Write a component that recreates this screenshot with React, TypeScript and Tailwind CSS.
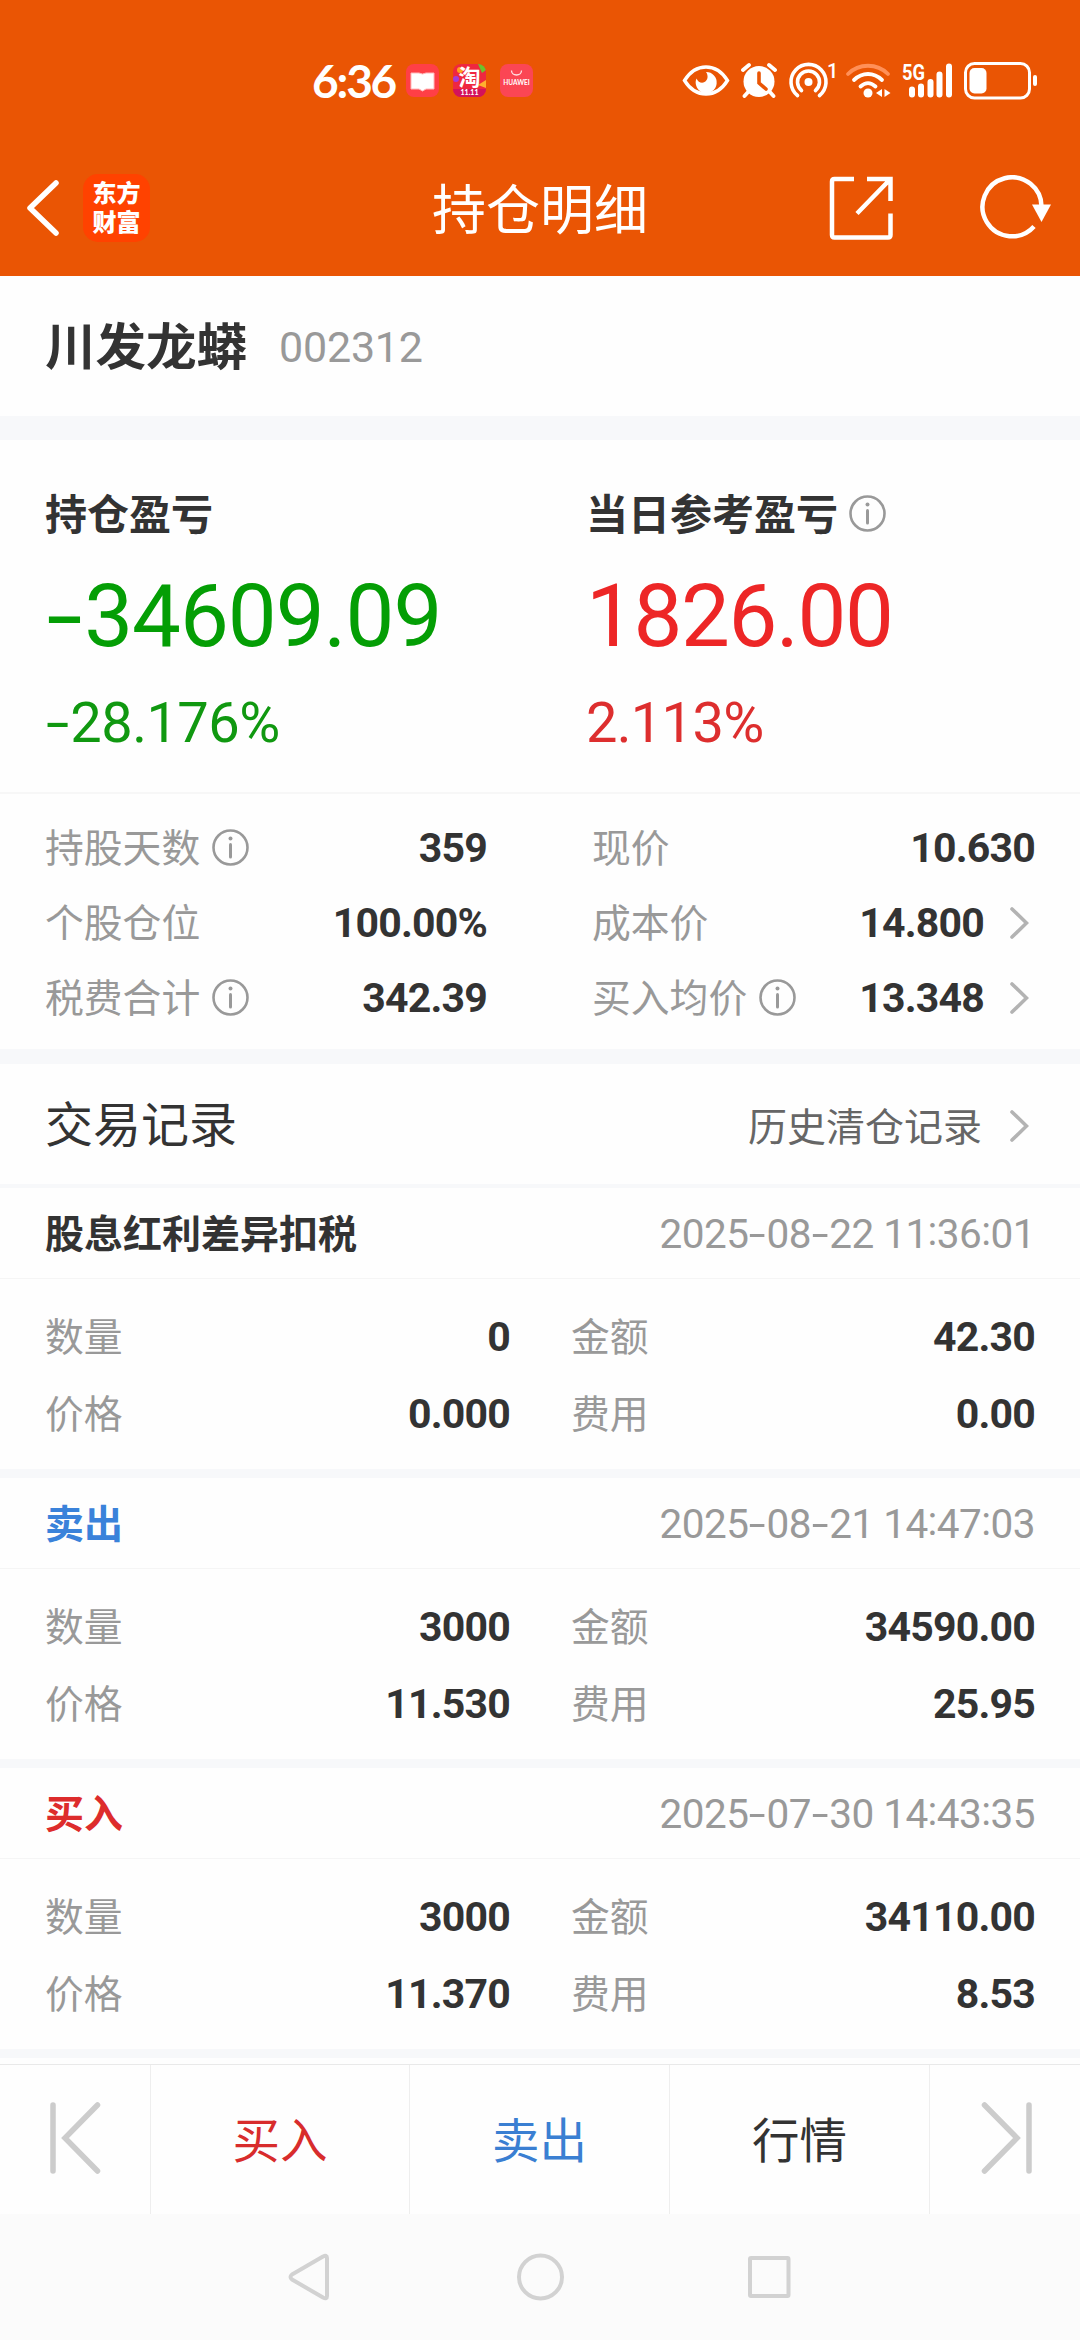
import clsx from 'clsx'

type Stat = { label: string; value: string; info?: boolean; link?: boolean }

const leftStats: Stat[] = [
  { label: '持股天数', value: '359', info: true },
  { label: '个股仓位', value: '100.00%' },
  { label: '税费合计', value: '342.39', info: true },
]

const rightStats: Stat[] = [
  { label: '现价', value: '10.630' },
  { label: '成本价', value: '14.800', link: true },
  { label: '买入均价', value: '13.348', info: true, link: true },
]

const records = [
  {
    name: '股息红利差异扣税',
    color: 'text-[#333333]',
    time: '2025-08-22 11:36:01',
    amount: '0',
    price: '0.000',
    total: '42.30',
    fee: '0.00',
  },
  {
    name: '卖出',
    color: 'text-[#3a82da]',
    time: '2025-08-21 14:47:03',
    amount: '3000',
    price: '11.530',
    total: '34590.00',
    fee: '25.95',
  },
  {
    name: '买入',
    color: 'text-[#dd2c2c]',
    time: '2025-07-30 14:43:35',
    amount: '3000',
    price: '11.370',
    total: '34110.00',
    fee: '8.53',
  },
]

function InfoIcon() {
  return (
    <svg width="37" height="37" viewBox="0 0 37 37" fill="none" stroke="#999999" className="shrink-0">
      <circle cx="18.5" cy="18.5" r="17" strokeWidth="2.6" />
      <path d="M18.5 15.5v12.5" strokeWidth="3" strokeLinecap="round" />
      <circle cx="18.5" cy="9.6" r="2" fill="#999999" stroke="none" />
    </svg>
  )
}

function Chevron() {
  return (
    <svg width="20" height="32" viewBox="0 0 20 32" fill="none" stroke="#b3b3b3" strokeWidth="3.6" className="shrink-0">
      <path d="M3 2l14.5 14L3 30" strokeLinecap="round" />
    </svg>
  )
}

// Figures with a wide dash and a colon centred on the digits
function Num({ children, className }: { children: string; className?: string }) {
  return (
    <span className={clsx('pt-[2px] font-[Roboto] whitespace-pre', className)}>
      {children.split(/([-:])/).map((part, i) => {
        if (part === '-') {
          return (
            <span key={i} className="inline-block w-[0.45em] scale-x-150 text-center tracking-normal">
              -
            </span>
          )
        }
        if (part === ':') {
          return (
            <span key={i} className="relative -top-[0.08em]">
              :
            </span>
          )
        }
        return part
      })}
    </span>
  )
}

function Value({ children }: { children: string }) {
  return <Num className="text-[41px] font-bold tracking-[-0.8px] text-[#333333]">{children}</Num>
}

function StatusBar() {
  return (
    <div className="flex h-[140px] items-start pr-[42px] pl-[312px] pt-[60px]">
      <span className="w-[94px] font-[Lato] text-[46px] leading-[42px] font-bold tracking-[-2.2px]">6:36</span>
      <div className="mt-1 flex gap-[14px]">
        <svg width="33" height="33" viewBox="0 0 33 33">
          <rect width="33" height="33" rx="8" fill="#ff3f46" />
          <path d="M5 9h8l3.500 1 3.500-1h8v16h-8l-3.500 2-3.500-2H5z" fill="#fff" stroke="#ffb9bb" />
        </svg>
        <div className="relative h-[33px] w-[33px] rounded-[8px] bg-[#ef2740]">
          <svg className="absolute inset-0 rounded-[8px]" width="33" height="33" viewBox="0 0 33 33">
            <path d="M0 25h33v8H0z" fill="#d3125b" />
            <circle cx="7" cy="6" r="3" fill="#ffa21f" />
            <circle cx="3" cy="15" r="3" fill="#a43bd8" />
            <path d="M25 0h8v6l-4 3z" fill="#6cc42b" />
            <path d="M25 21l8-5v8z" fill="#ffb02e" />
          </svg>
          <span className="absolute inset-x-0 top-0 text-center text-[22px] leading-[23px] font-bold">淘</span>
          <span className="absolute inset-x-0 top-[25px] text-center font-[Lato] text-[7px] leading-[7px] font-black">11.11</span>
        </div>
        <div className="relative h-[33px] w-[33px] rounded-[8px] bg-[#fb4654]">
          <svg className="absolute inset-0" width="33" height="33" viewBox="0 0 33 33" fill="none">
            <path d="M11.500 6.500a5 4.500 0 0 0 10 0" stroke="#ffe1e3" strokeWidth="1.300" />
          </svg>
          <span className="absolute inset-x-0 top-[15px] text-center font-[Lato] text-[6.500px] leading-[8px] font-bold">
            HUAWEI
          </span>
        </div>
      </div>
      <svg className="ml-auto" width="376" height="42" viewBox="661 60 376 42" fill="none" stroke="#fff">
        {/* eye comfort */}
        <path d="M683.500 80.500c5-8 12.500-13.500 21.500-13.500s16.500 5.500 21.500 13.500c-5 8-12.500 13.500-21.500 13.500s-16.500-5.500-21.500-13.500z" strokeWidth="3.400" />
        <path d="M705 72a10.500 10.500 0 1 1-9.500 6.500c1.500 4 5.500 5 8 3.500 3.500-2 4-6.500 1.500-10z" fill="#fff" stroke="none" />
        {/* alarm */}
        <circle cx="758" cy="81.500" r="15.500" fill="#fff" stroke="none" />
        <path d="M742 70l6-5M774 70l-6-5M748 91l-4.500 5M768 91l4.500 5" strokeWidth="3.800" strokeLinecap="round" />
        <path d="M758 73v10l7 6" stroke="#ea5504" strokeWidth="3.600" strokeLinecap="round" />
        {/* hotspot */}
        <circle cx="807.500" cy="82" r="4" fill="#fff" stroke="none" />
        <path d="M800.500 90.500a11 11 0 1 1 14 0" strokeWidth="3.600" strokeLinecap="round" />
        <path d="M796.500 95.500a17.500 17.500 0 1 1 22 0" strokeWidth="3.600" strokeLinecap="round" />
        <text x="826" y="78" className="font-[Roboto] text-[20px] font-medium" fill="#fff" stroke="none">1</text>
        {/* wifi */}
        <path d="M847 74c11-11 29-11 40 0" stroke="#ff9058" strokeWidth="3.800" strokeLinecap="round" />
        <path d="M853 80c8.500-8 19.500-8 28 0M859.500 86.500c5-4.500 10-4.500 15 0" strokeWidth="3.800" strokeLinecap="round" />
        <circle cx="867" cy="93" r="4.500" fill="#fff" stroke="none" />
        <path d="M881 89v8l-6-4zM883.500 89v8l6-4z" fill="#fff" stroke="none" />
        {/* signal */}
        <text x="901" y="80" textLength="23" lengthAdjust="spacingAndGlyphs" className="font-[Roboto] text-[22px] font-bold" fill="#fff" stroke="none">5G</text>
        <path d="M911 89.500v5M920 86.500v8M929.500 82v12.500M938.500 74.500v20M948 66.500v28" strokeWidth="6" strokeLinecap="round" />
        {/* battery */}
        <rect x="964.500" y="63.500" width="64" height="34.500" rx="9" strokeWidth="3" />
        <rect x="968.500" y="68" width="17" height="25.500" rx="5" fill="#fff" stroke="none" />
        <path d="M1034 77v7" strokeWidth="4" strokeLinecap="round" />
      </svg>
    </div>
  )
}

function Header() {
  return (
    <header className="h-[276px] bg-[#ea5504] text-white">
      <StatusBar />
      <div className="grid h-[136px] grid-cols-3 items-center pr-[28px] pl-[26px]">
        <div className="flex items-center gap-[24px]">
          <svg width="33" height="56" viewBox="0 0 33 56" fill="none" stroke="#fff" strokeWidth="5.500">
            <path d="M30 3L4 28l26 25" strokeLinecap="round" strokeLinejoin="round" />
          </svg>
          <div className="h-[68px] w-[67px] rounded-[15px] bg-[#ff4200] pt-[3px] text-center text-[24px] leading-[29px] font-black">
            东方
            <br />
            财富
          </div>
        </div>
        <h1 className="pb-[3px] pl-[2px] text-center text-[54px] leading-none">持仓明细</h1>
        <div className="flex items-center justify-end gap-[86px]">
          <svg width="66" height="66" viewBox="0 0 66 66" fill="none" stroke="#fff" strokeWidth="4.500">
            <path d="M26 4H6.500Q4 4 4 6.500V60q0 2.500 2.500 2.500H60q2.500 0 2.500-2.500V38.500" />
            <path d="M39 4h23.500v22M62.500 4L29 38.500" />
          </svg>
          <svg width="72" height="66" viewBox="0 0 72 66" fill="none" stroke="#fff" strokeWidth="4.500">
            <path d="M61.500 33A29.500 29.500 0 1 0 54 51.500" />
            <path d="M52 29.500h19L61.500 47z" fill="#fff" stroke="none" />
          </svg>
        </div>
      </div>
    </header>
  )
}

function StatColumn({ stats }: { stats: Stat[] }) {
  return (
    <div className="flex flex-col">
      {stats.map((s) => (
        <div key={s.label} className="flex h-[75px] items-center">
          <span className="mr-[12px] pb-1 text-[38.800px] text-[#999999]">{s.label}</span>
          {s.info && <InfoIcon />}
          <span className="ml-auto flex items-center gap-[25px]">
            <Value>{s.value}</Value>
            {s.link && (
              <span className="mr-[6px]">
                <Chevron />
              </span>
            )}
          </span>
        </div>
      ))}
    </div>
  )
}

function Pair({ label, value }: { label: string; value: string }) {
  return (
    <div className="flex h-[77px] items-center justify-between">
      <span className="pb-[5px] text-[38.800px] text-[#999999]">{label}</span>
      <Value>{value}</Value>
    </div>
  )
}

function Record({ record }: { record: (typeof records)[number] }) {
  return (
    <section className="h-[290px] border-b-[9px] border-[#f7f8fa]">
      <div className="flex h-[91px] items-center justify-between border-b border-[#f5f5f5] pr-[45px] pl-[45px]">
        <span className={clsx('pb-1 text-[39px] font-bold', record.color)}>{record.name}</span>
        <Num className="text-[40.500px] tracking-[-0.55px] text-[#999999]">{record.time}</Num>
      </div>
      <div className="grid grid-cols-[465px_464px] gap-x-[61px] pt-[19px] pl-[45px]">
        <Pair label="数量" value={record.amount} />
        <Pair label="金额" value={record.total} />
        <Pair label="价格" value={record.price} />
        <Pair label="费用" value={record.fee} />
      </div>
    </section>
  )
}

export default function App() {
  return (
    <div className="flex h-[2340px] w-[1080px] flex-col overflow-hidden bg-[#fefefe] font-['Noto_Sans_CJK_SC',sans-serif] leading-none text-[#333333]">
      <Header />

      <section className="flex h-[164px] items-center gap-[32px] border-b-[24px] border-[#f7f8fa] pl-[45px]">
        <span className="pb-[6px] text-[50.500px] font-bold">川发龙蟒</span>
        <Num className="text-[43px] tracking-[-0.2px] text-[#999999]">002312</Num>
      </section>

      <section className="grid h-[354px] grid-cols-[541px_539px] border-b-2 border-[#f7f7f7] pl-[45px] pt-[48px]">
        <div>
          <div className="flex h-[50px] items-center pb-[3px] text-[42px] font-bold">持仓盈亏</div>
          <div className="flex h-[154px] items-center text-[#049e05]">
            <Num className="text-[87px] tracking-[-1px]">-34609.09</Num>
          </div>
          <div className="flex h-[60px] items-center text-[#109810]">
            <Num className="text-[56px] tracking-[-0.5px]">-28.176%</Num>
          </div>
        </div>
        <div>
          <div className="flex h-[50px] items-center gap-[11px] text-[42px] font-bold">
            <span className="pb-[3px]">当日参考盈亏</span>
            <InfoIcon />
          </div>
          <div className="flex h-[154px] items-center text-[#ed2626]">
            <Num className="text-[87px] tracking-[-1.4px]">1826.00</Num>
          </div>
          <div className="flex h-[60px] items-center text-[#dd2e2e]">
            <Num className="text-[56px] tracking-[-0.7px]">2.113%</Num>
          </div>
        </div>
      </section>

      <section className="grid h-[270px] grid-cols-[442px_443px] gap-x-[105px] border-b-[15px] border-[#f7f8fa] pt-[16px] pl-[45px]">
        <StatColumn stats={leftStats} />
        <StatColumn stats={rightStats} />
      </section>

      <section className="flex h-[124px] items-center justify-between border-b-4 border-[#f7f8fa] pr-[51px] pl-[45px]">
        <h2 className="pb-[6px] text-[48px]">交易记录</h2>
        <span className="flex items-center gap-[27px] pt-[3px] text-[39px] text-[#666666]">
          <span className="pb-[2px]">历史清仓记录</span>
          <Chevron />
        </span>
      </section>

      {records.map((r) => (
        <Record key={r.time} record={r} />
      ))}

      <nav className="mt-[6px] grid h-[150px] grid-cols-[151px_259px_260px_260px_150px] border-t border-[#e9e9e9] text-center text-[47.500px] leading-[145px] [&>*:not(:last-child)]:border-r [&>*]:border-[#eeeeee]">
        <span className="flex items-center pb-[4px] pl-[49px]">
          <svg width="54" height="74" viewBox="0 0 54 74" fill="none" stroke="#cccccc" strokeWidth="5.500" strokeLinecap="round">
            <path d="M4 4v66M48.500 4L16 37l32.500 33" />
          </svg>
        </span>
        <span className="text-[#d82c2c]">买入</span>
        <span className="text-[#3a7fd2]">卖出</span>
        <span>行情</span>
        <span className="flex items-center justify-end pr-[47px] pb-[4px]">
          <svg width="54" height="74" viewBox="0 0 54 74" fill="none" stroke="#cccccc" strokeWidth="5.500" strokeLinecap="round">
            <path d="M50 4v66M5.500 4L38 37 5.500 70" />
          </svg>
        </span>
      </nav>

      <footer className="flex h-[126px] items-center justify-between bg-[#fbfbfb] px-[286px]">
        <svg width="48" height="52" viewBox="0 0 48 52" fill="none" stroke="#d2d2d2" strokeWidth="4">
          <path d="M37 5.500Q41 3.500 41 7v38q0 3.500-4 1.500L6 28.500Q3 26 6 23.500z" strokeLinejoin="round" />
        </svg>
        <svg width="50" height="50" viewBox="0 0 50 50" fill="none" stroke="#d2d2d2" strokeWidth="4">
          <circle cx="25.500" cy="25" r="21.500" />
        </svg>
        <svg width="48" height="48" viewBox="0 0 48 48" fill="none" stroke="#d2d2d2" strokeWidth="4">
          <rect x="4" y="5" width="38.500" height="38" rx="1" />
        </svg>
      </footer>
    </div>
  )
}
